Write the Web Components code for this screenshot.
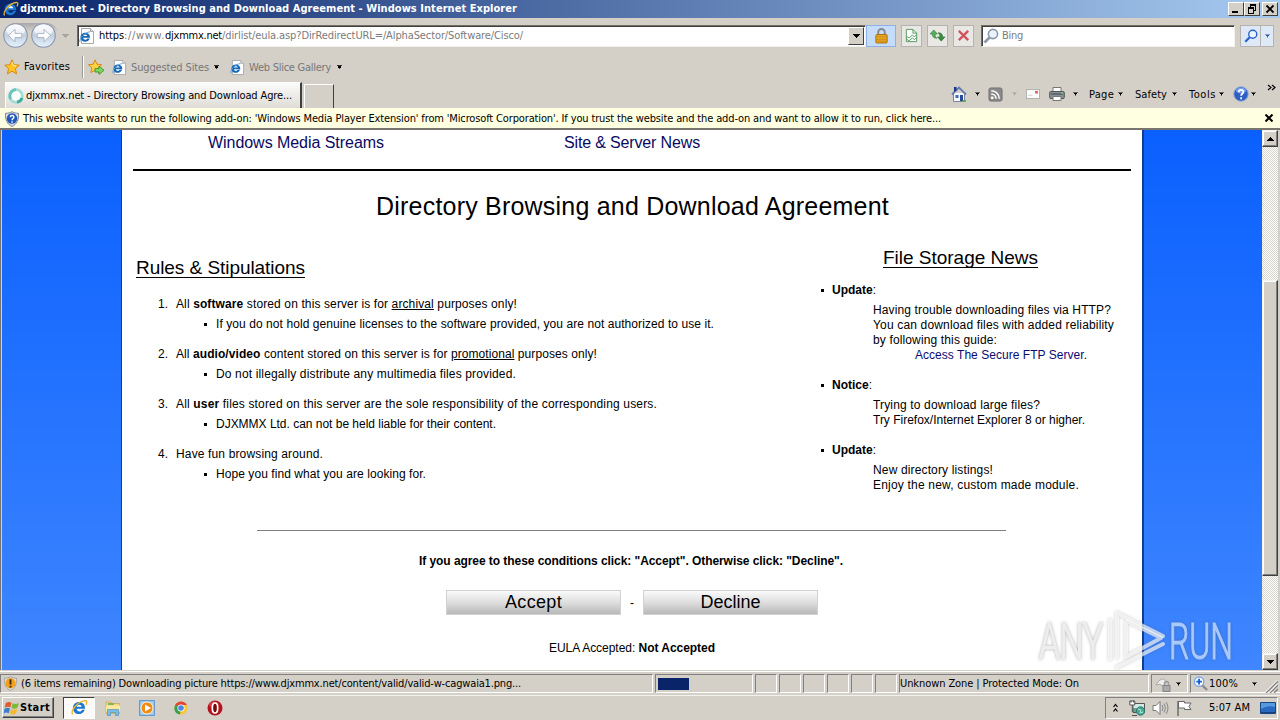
<!DOCTYPE html>
<html lang="en">
<head>
<meta charset="utf-8">
<title>djxmmx.net - Directory Browsing and Download Agreement</title>
<style>
    html, body { margin: 0; height: 100%; overflow: hidden; }
</style>
</head>
<body>
<ie-window></ie-window>

<script>
const ICONS = {
    ie: `<path d="M13.200 9.200H5.300c.2 3.200 4.300 3.300 5 .8h2.700C10.500 16.500 1.800 15 1.800 8.500 1.800 1 13.500.5 13.200 9.200z" fill="#1b77d2"/><path d="M5.400 7.300h4.700C9.800 4.700 5.800 4.700 5.400 7.300z" fill="#fff"/><path d="M1.500 14.500C-.5 11 6 2.500 13 1.500c2.500-.3 2 2 1 4" fill="none" stroke="#e9b82c" stroke-width="1.300"/>`,
    iepage: `<path d="M2.500.5h9l3 3v12h-12z" fill="#fff" stroke="#a9a9a9"/><path d="M11.500.5v3h3" fill="#ddd" stroke="#a9a9a9"/><path d="M11 9.800H4.200c.3 2.400 3.300 2.300 4 .6h2.600C9 15.400 1.500 14.500 1.500 9.200 1.500 3 11.500 3.200 11 9.800z" fill="#1768b8"/><path d="M4.300 8h3.900C7.800 6.200 5 6.200 4.300 8z" fill="#fff"/><path d="M1 14C0 11 5 4.500 11 3.800" fill="none" stroke="#55a0dd"/>`,
    back: `<circle cx="12" cy="12" r="11.300" fill="url(#g)" stroke="#8595aa"/><ellipse cx="12" cy="7" rx="9" ry="5.500" fill="#fff" opacity=".65"/><path d="M5.500 12l6-6v4h6.500v4h-6.500v4z" fill="#fff" stroke="#9dacbd" stroke-width=".8"/><defs><linearGradient id="g" x2="0" y2="1"><stop stop-color="#f3f5f8"/><stop offset=".5" stop-color="#c5d0de"/><stop offset="1" stop-color="#e5f3ff"/></linearGradient></defs>`,
    star: `<path d="M8 .8l2.100 4.900 5.200.5-3.900 3.500 1.200 5.200L8 12.200l-4.600 2.700 1.200-5.200L.7 6.200l5.200-.5z" fill="#ffc423" stroke="#d98a12"/><path d="M8 3l1.300 3.500 3 .4" fill="none" stroke="#fff0a0"/>`,
    addstar: `<path d="M7 .8l1.900 4.400 4.800.5-3.500 3.200 1 4.700L7 11.200l-4.200 2.400 1-4.700L.5 5.700l4.700-.5z" fill="#ffd042" stroke="#d98a12"/><path d="M7 9.500h4V7l5 4.200-5 4.300V13H7z" fill="#7fd65f" stroke="#2b9228" stroke-width=".8"/>`,
    lock: `<path d="M4.500 8V4.500a3.500 3.500 0 017 0V8" fill="none" stroke="#888" stroke-width="2"/><rect x="2" y="7" width="12" height="9" rx="1" fill="#efad25" stroke="#a56a08"/><path d="M2.500 9.500h11M2.500 12h11M2.500 14h11" stroke="#b97b11" stroke-width=".8"/>`,
    compat: `<path d="M2.500 1.500h7l4 4v9h-11z" fill="#fff" stroke="#52975b"/><path d="M9.500 1.500v4h4M2.500 9l3 1.500 3.500-3 2 2 2.500-2.500M2.500 12l3 1.500 3.500-3 2 2 2.500-2.500" fill="none" stroke="#52975b"/>`,
    refresh: `<path d="M0 6.500l4-4.500 4 4.500H5.500C5.500 9 6 10 7.500 11 4 11 2.500 9.500 2.500 6.500z" fill="#55ad59" stroke="#2e7b34" stroke-width=".6"/><path d="M16 9.500L12 14 8 9.500h2.500C10.500 7 10 6 8.500 5c3.500 0 5 1.500 5 4.500z" fill="#398b40" stroke="#286c2f" stroke-width=".6"/>`,
    stop: `<path d="M3 3l10 10M13 3L3 13" stroke="#d3535c" stroke-width="2.500"/>`,
    find: `<circle cx="10" cy="6" r="4.600" fill="#eaf4ff" stroke="var(--ink,#8c98a6)" stroke-width="1.600"/><path d="M6.500 9.500L1.500 14.500" stroke="var(--ink,#8c98a6)" stroke-width="2.600"/>`,
    home: `<path d="M2.500 7v8.500h11V7" fill="#f6f8ff" stroke="#7886a5"/><path d="M1 8.500L8 1.500l7 7" fill="none" stroke="#5f7cad" stroke-width="1.800"/><path d="M3 1h2.500v3L3 6z" fill="#19328a"/><rect x="4.500" y="9" width="3" height="3" fill="#3e6db8"/><rect x="9" y="9" width="3" height="6" fill="#2a4998"/><path d="M12 14h3v2h-4z" fill="#62ad48"/>`,
    rss: `<rect x="1" y="1" width="14" height="14" rx="2" fill="#8a8a8a" stroke="#707070"/><circle cx="4.500" cy="11.500" r="1.500" fill="#fff"/><path d="M3.500 7.500a5 5 0 015 5M3.500 4a8.500 8.500 0 018.500 8.500" fill="none" stroke="#fff" stroke-width="1.600"/>`,
    mail: `<rect x=".5" y="3" width="15" height="10" fill="#fdfdfd" stroke="#aaa"/><rect x="10.500" y="4.500" width="3" height="3" fill="#e0555a"/><path d="M2.500 9.500h5" stroke="#ccc"/>`,
    printer: `<path d="M4 6V1.500h8V6" fill="#fff" stroke="#777"/><rect x=".7" y="5.500" width="14.600" height="7" rx="1" fill="#888f99" stroke="#50555b"/><path d="M2 8h12" stroke="#3f444a"/><path d="M4 10.500h8v4H4z" fill="#fff" stroke="#777"/><path d="M12 7h2" stroke="#8ce65f"/>`,
    help: `<circle cx="8" cy="8" r="7.300" fill="#2e5fc4" stroke="#9ab0d4"/><ellipse cx="8" cy="4.500" rx="5" ry="3" fill="#7ba0ea"/><path d="M5.700 6.100c.2-3 4.900-2.800 4.700 0 0 1.700-2.300 1.700-2.300 3.700M8.100 11.200v2" fill="none" stroke="#fff" stroke-width="1.700"/>`,
    shield: `<path d="M8 .7c2 1.200 4 1.600 6.500 1.600C15 9 12.500 13.500 8 15.500 3.500 13.500 1 9 1.500 2.300 4 2.300 6 1.900 8 .7z" fill="#d9dde6" stroke="#7b8494"/><circle cx="8" cy="7.500" r="5.200" fill="#2458b8"/><path d="M6.200 6.300c.2-2.500 3.900-2.200 3.700 0 0 1.200-1.800 1.300-1.800 2.900M8.100 10.300v1.500" fill="none" stroke="#fff" stroke-width="1.400"/>`,
    warn: `<path d="M8 .7c2 1.200 4 1.600 6.500 1.600C15 9 12.500 13.500 8 15.500 3.500 13.500 1 9 1.500 2.300 4 2.300 6 1.900 8 .7z" fill="#ddd" stroke="#a0a0a0"/><circle cx="8" cy="7.700" r="5.500" fill="#f3a11e"/><path d="M8 3.500v5.500M8 10.300v2" stroke="#402800" stroke-width="2"/>`,
    ring: `<circle cx="8" cy="8" r="6.300" fill="#f9fdfb" stroke="#a5dcd5" stroke-width="2.800"/><path d="M8 1.700a6.300 6.300 0 00-5.300 9.500" fill="none" stroke="#6cc4b9" stroke-width="2.800"/><path d="M14 10a6.300 6.300 0 01-5 4.200" fill="none" stroke="#3fae9f" stroke-width="2.800"/>`,
    windows: `<path d="M1.800 3C4 1.500 5.800 1.800 7.500 2.800L6.300 7.500C4.500 6.500 2.800 6.500.7 7.700z" fill="#e25b2c"/><path d="M8.600 3.200c2 1 3.800 1 6.200-.2L13.500 7.800c-2 1.200-4.200 1.100-6.100.1z" fill="#7cb936"/><path d="M.5 8.800c2-1.200 3.800-1.200 5.500-.2L4.800 13.300c-2-1-3.600-1-5.100.1z" fill="#3e7ecb"/><path d="M7.100 9c2 1 4 1 6.100 0L12 13.800c-2 1-4 1-6.100 0z" fill="#f4b92f"/>`,
    folder: `<path d="M1 3.500v-1.500h5l1 1.500h7.500v10H1z" fill="#f6d779" stroke="#c7a451" stroke-width=".7"/><path d="M3 3h6v2H3z" fill="#76b85b"/><path d="M1 5.500h14v6H1z" fill="#fbe8a0"/><path d="M2.500 15.500V9.500h11v6h-3v-3h-5v3z" fill="#77bde8" stroke="#4788b9" stroke-width=".6"/>`,
    player: `<rect x=".7" y=".7" width="14.600" height="14.600" fill="#a8d1f2" stroke="#4e8fc9"/><circle cx="8" cy="8" r="6" fill="#f28a16" stroke="#fff0d0"/><path d="M6 4.500v7L12 8z" fill="#fff"/>`,
    chrome: `<circle cx="8" cy="8" r="6.500" fill="#fbc72c"/><path d="M8 8L2 5C4.500.2 12 .2 14 5H8z" fill="#df4637"/><path d="M2.200 5L8 8l-1 6.400C1.500 14 .3 8.500 2.200 5z" fill="#3a9e50"/><circle cx="8" cy="8" r="3.600" fill="#fff"/><circle cx="8" cy="8" r="2.800" fill="#4b87e8"/>`,
    opera: `<circle cx="8" cy="8" r="7.500" fill="#b5121b"/><ellipse cx="7" cy="4.500" rx="5" ry="3" fill="#e5525a" opacity=".65"/><ellipse cx="8" cy="8" rx="2.700" ry="5" fill="#7c080e" stroke="#fff" stroke-width="1.700"/>`,
    net: `<path d="M4 3.500h11.500v9H4z" fill="#67a895" stroke="#555"/><path d="M4.500 4h10.500v4H4.500z" fill="#d5e9e4"/><path d="M.8 1h5v4h-5zM3.300 5v7M2 .5v2M4.600.5v2" fill="#fff" stroke="#555"/><circle cx="11.500" cy="11" r="4.200" fill="#4aa69a" stroke="#2a776f"/><path d="M9 9l3 1-1 3 3-1" stroke="#b3e6c2" fill="none"/><path d="M3 15.500h5" stroke="#555"/>`,
    speaker: `<path d="M1 5.500h3l4-4v13l-4-4H1z" fill="#fff" stroke="#777"/><path d="M10 5q2 3 0 6M12 3.500q3 4.500 0 9M14 2q4 6 0 12" fill="none" stroke="#888"/>`,
    flag: `<path d="M2 1v15" stroke="#666" stroke-width="1.400"/><path d="M2.500 1.500h6v1.500h6.500l-2 3.500 2 3H8.500V8h-6z" fill="#fff" stroke="#666"/>`,
    desktop: `<path d="M.5 2.500h15v11H.5z" fill="#2669bf" stroke="#184680"/><path d="M1 3h14v4Q7 5 1 9z" fill="#5799df"/><path d="M1 12.500h14" stroke="#1b3f7d"/><path d="M5 15h6" stroke="#bcd"/>`,
    filter: `<path d="M1 9q4-7 8-6l2 3-3 4q-3-3-7-1z" fill="#eee" stroke="#aaa"/><path d="M9.500 10V7.500a2 2 0 014 0V10" fill="none" stroke="#999" stroke-width="1.400"/><rect x="8" y="9.500" width="7" height="6" fill="#aaa" stroke="#858585"/>`,
    zoomin: `<circle cx="6.500" cy="6" r="5" fill="#fff" stroke="#7caae5" stroke-width="1.500"/><path d="M3.500 6h6M6.500 3v6" stroke="#155fd0" stroke-width="2"/><path d="M10 10l5 5" stroke="#8b8b8b" stroke-width="2.400"/>`
};

// Single line of text, tracked so that it fills the width in the "w" attribute
class UiText extends HTMLElement {
    constructor() {
        super();
        this.attachShadow({mode: 'open'}).innerHTML = `
            <style>:host { display: inline-block; flex: none; white-space: nowrap; }</style><slot></slot>`;
    }

    connectedCallback() {
        const w = parseFloat(this.getAttribute('w'));
        if (!w) return;
        this.style.letterSpacing = '0';
        const natural = this.getBoundingClientRect().width;
        this.style.letterSpacing = (w - natural) / this.textContent.length + 'px';
        this.style.width = w + 'px';
    }
}

class UiIcon extends HTMLElement {
    constructor() {
        super();
        this.attachShadow({mode: 'open'});
    }

    connectedCallback() {
        const size = this.getAttribute('size') || 16;
        const box = this.getAttribute('name') === 'back' ? 24 : 16;
        this.shadowRoot.innerHTML = `
            <style>
                :host { display: block; flex: none; width: ${size}px; height: ${size}px; }
                svg { display: block; overflow: visible; }
            </style>
            <svg width="${size}" height="${size}" viewBox="0 0 ${box} ${box}">${ICONS[this.getAttribute('name')]}</svg>`;
    }
}

// Small triangle used by menus, combo boxes and scroll buttons
class UiArrow extends HTMLElement {
    constructor() {
        super();
        this.attachShadow({mode: 'open'}).innerHTML = `
            <style>
                :host { display: block; flex: none; width: 7px; height: 4px; color: #000; }
                :host([up]) { transform: rotate(180deg); }
                svg { display: block; }
            </style>
            <svg width="7" height="4" shape-rendering="crispEdges"><path d="M0 0h7L3.500 4z" fill="currentColor"/></svg>`;
    }
}

const ROW = `* { box-sizing: border-box; } :host { display: flex; box-sizing: border-box; flex: none; align-items: center; }`;

function define(name, html) {
    customElements.define(name, class extends HTMLElement {
        constructor() {
            super();
            this.attachShadow({mode: 'open'}).innerHTML = html;
        }
    });
}

customElements.define('ui-text', UiText);
customElements.define('ui-icon', UiIcon);
customElements.define('ui-arrow', UiArrow);

define('ie-titlebar', `
    <style>
        ${ROW}
        :host { height: 18px; padding: 0 2px 0 3px; background: linear-gradient(90deg, #0a246a, #a6caf0); color: #fff; font-weight: bold; }
        ui-text { margin-left: 1px; }
        .buttons { display: flex; margin-left: auto; }
        .buttons svg { display: block; width: 16px; height: 14px; background: #d4d0c8; border: 1px solid; border-color: #fff #404040 #404040 #fff; }
        .buttons svg:last-child { margin-left: 2px; }
    </style>
    <ui-icon name="ie"></ui-icon><ui-text w="497">djxmmx.net - Directory Browsing and Download Agreement - Windows Internet Explorer</ui-text>
    <div class="buttons">
        <svg viewBox="0 0 14 12"><path d="M3 9h6" stroke="#000" stroke-width="2"/></svg>
        <svg viewBox="0 0 14 12" shape-rendering="crispEdges"><path d="M5 2.500h6M5 1.500h6M10.500 2v5H9M5.500 2v2M3 5.500h6M3 4.500h6M3.500 5v5h5V5" fill="none" stroke="#000"/></svg>
        <svg viewBox="0 0 14 12"><path d="M3.500 2.500l7 7M10.500 2.500l-7 7" stroke="#000" stroke-width="1.800"/></svg>
    </div>`);

define('ie-navbar', `
    <style>
        ${ROW}
        :host { height: 35px; padding-left: 3px; }
        .travel { display: flex; gap: 3px; flex: none; padding-right: 3px; border-radius: 13px; background: linear-gradient(#aaa8ad, #d4d0c8 35%); }
        .travel ui-icon:last-child { transform: scaleX(-1); }
        .field { display: flex; align-items: center; height: 22px; flex: none; background: #fff; border: 1px solid; border-color: #716f64 #f4f2ec #f4f2ec #716f64; box-shadow: inset 1px 1px #404040; }
        .field ui-text { padding-top: 1px; }
        .button { display: flex; align-items: center; justify-content: center; height: 22px; width: 21px; flex: none; border: 1px solid #b5b3af; background: #e9e8e5; }
        .combo { width: 16px; height: 18px; margin-left: auto; margin-right: 1px; background: #d4d0c8; border: 1px solid; border-color: #fff #404040 #404040 #fff; display: flex; align-items: center; justify-content: center; }
        .gray { color: #7b7b7b; }
    </style>
    <div class="travel"><ui-icon name="back" size="25"></ui-icon><ui-icon name="back" size="25"></ui-icon></div>
    <ui-arrow style="margin-left:3px;color:#aaa69f"></ui-arrow>
    <div class="field" style="width:789px;margin-left:8px">
        <ui-icon name="iepage" style="margin-left:1px"></ui-icon>
        <ui-text w="25" style="margin-left:4px">https</ui-text><ui-text class="gray" w="41">://www.</ui-text><ui-text w="57">djxmmx.net</ui-text><ui-text class="gray" w="301">/dirlist/eula.asp?DirRedirectURL=/AlphaSector/Software/Cisco/</ui-text>
        <div class="combo"><ui-arrow></ui-arrow></div>
    </div>
    <div class="button" style="width:30px;background:#c5dcfa;border-color:#8db1e7"><ui-icon name="lock" size="15"></ui-icon></div>
    <div class="button" style="margin-left:5px"><ui-icon name="compat" size="15"></ui-icon></div>
    <div class="button" style="margin-left:5px"><ui-icon name="refresh" size="15"></ui-icon></div>
    <div class="button" style="margin-left:5px"><ui-icon name="stop" size="15"></ui-icon></div>
    <div class="field" style="width:254px;margin-left:7px"><ui-icon name="find" style="margin-left:1px"></ui-icon><ui-text class="gray" w="21" style="margin-left:3px">Bing</ui-text></div>
    <div class="button" style="margin-left:5px;background:#dfe8f7;--ink:#2b62c8"><ui-icon name="find" size="14"></ui-icon></div>
    <div class="button" style="width:14px;margin-left:-1px;background:#dfe8f7"><ui-arrow style="color:#235ba8;transform:scale(.8)"></ui-arrow></div>`);

define('ie-favorites', `
    <style>
        ${ROW}
        :host { height: 28px; padding-left: 4px; color: #777; }
        .line { width: 2px; height: 22px; margin: 0 5px 0 12px; border-left: 1px solid #999; border-right: 1px solid #fff; }
    </style>
    <ui-icon name="star"></ui-icon><ui-text w="46" style="margin-left:4px;color:#000">Favorites</ui-text>
    <div class="line" style="margin-right:4px"></div>
    <ui-icon name="addstar"></ui-icon>
    <ui-icon name="iepage" size="15" style="margin-left:8px"></ui-icon><ui-text w="78" style="margin:1px 0 0 4px">Suggested Sites</ui-text><ui-arrow style="margin-left:4px;transform:scale(.85)"></ui-arrow>
    <ui-icon name="iepage" size="15" style="margin-left:10px"></ui-icon><ui-text w="82" style="margin:1px 0 0 4px">Web Slice Gallery</ui-text><ui-arrow style="margin-left:5px;transform:scale(.85)"></ui-arrow>`);

define('ie-tabs', `
    <style>
        ${ROW}
        :host { height: 27px; padding-left: 5px; align-items: flex-end; }
        .tab { display: flex; align-items: center; width: 297px; height: 26px; padding: 1px 0 0 2px; background: linear-gradient(#fbfbfa, #dfdcd6); border: solid; border-width: 1px 2px 0 1px; border-color: #fff #404040 #fff #fff; }
        .new { width: 30px; height: 24px; margin-left: 2px; border: solid; border-width: 1px 1px 0 1px; border-color: #fff #404040 #fff #fff; }
        .commands { display: flex; align-items: center; height: 28px; margin-left: auto; width: 329px; flex: none; }
        .commands ui-text { padding-top: 1px; }
        ui-arrow { transform: scale(.8); }
    </style>
    <div class="tab"><ui-icon name="ring"></ui-icon><ui-text w="266" style="margin-left:2px">djxmmx.net - Directory Browsing and Download Agre...</ui-text></div>
    <div class="new"></div>
    <div class="commands">
        <ui-icon name="home"></ui-icon><ui-arrow style="margin-left:7px"></ui-arrow>
        <ui-icon name="rss" size="15" style="margin-left:7px"></ui-icon><ui-arrow style="margin-left:8px;color:#aaa69f"></ui-arrow>
        <ui-icon name="mail" size="14" style="margin-left:8px"></ui-icon>
        <ui-icon name="printer" style="margin-left:9px"></ui-icon><ui-arrow style="margin-left:7px"></ui-arrow>
        <ui-text w="25" style="margin-left:10px">Page</ui-text><ui-arrow style="margin-left:3px"></ui-arrow>
        <ui-text w="32" style="margin-left:11px">Safety</ui-text><ui-arrow style="margin-left:4px"></ui-arrow>
        <ui-text w="27" style="margin-left:11px">Tools</ui-text><ui-arrow style="margin-left:2px"></ui-arrow>
        <ui-icon name="help" style="margin-left:8px"></ui-icon><ui-arrow style="margin-left:1px"></ui-arrow>
        <svg width="9" height="8" style="margin:-13px 0 0 10px"><path d="M1 1l3 2.500L1 6M5 1l3 2.500L5 6" fill="none" stroke="#000" stroke-width="1.200"/></svg>
    </div>`);

define('ie-infobar', `
    <style>
        ${ROW}
        :host { height: 22px; padding: 0 7px 0 4px; background: #ffffe1; border-bottom: 2px solid #77756d; }
        svg { margin-left: auto; }
    </style>
    <ui-icon name="shield" style="margin-top:1px"></ui-icon><ui-text w="918" style="margin:2px 0 0 3px">This website wants to run the following add-on: 'Windows Media Player Extension' from 'Microsoft Corporation'. If you trust the website and the add-on and want to allow it to run, click here...</ui-text>
    <svg width="8" height="8"><path d="M.5.500l7 7M7.500.500l-7 7" stroke="#000" stroke-width="2"/></svg>`);

define('ie-scrollbar', `
    <style>
        * { box-sizing: border-box; }
        :host { display: flex; flex-direction: column; flex: none; width: 16px; background: repeating-conic-gradient(#fff 0 25%, #d8d5cd 0 50%) 0 0 / 2px 2px; }
        .button, .thumb { display: flex; flex: none; align-items: center; justify-content: center; height: 17px; background: #d4d0c8; border: 1px solid; border-color: #f4f2ec #404040 #404040 #f4f2ec; box-shadow: inset -1px -1px #808080, inset 1px 1px #fff; }
        .thumb { height: 296px; margin: 133px 0 auto; }
    </style>
    <div class="button"><ui-arrow up></ui-arrow></div><div class="thumb"></div><div class="button"><ui-arrow></ui-arrow></div>`);

define('rule-item', `
    <style>
        :host { display: block; height: 50px; line-height: 20px; }
        .row { display: flex; height: 20px; }
        .num { width: 40px; text-align: right; padding-right: 8px; box-sizing: border-box; }
        .dot { width: 3px; height: 3px; margin: 9px 9px 0 68px; background: #000; }
    </style>
    <div class="row"><span class="num"><slot name="num"></slot></span><slot></slot></div>
    <div class="row"><span class="dot"></span><slot name="note"></slot></div>`);

define('news-item', `
    <style>
        :host { display: block; margin-bottom: 15px; line-height: 15px; }
        .head { display: flex; height: 20px; line-height: 20px; }
        .dot { width: 3px; height: 3px; margin: 9px 8px 0 1px; background: #000; }
        .body { display: flex; flex-direction: column; align-items: flex-start; padding: 3px 0 0 53px; margin-bottom: -3px; }
    </style>
    <div class="head"><span class="dot"></span><slot name="head"></slot></div>
    <div class="body"><slot></slot></div>`);

define('eula-button', `
    <style>
        :host { display: flex; align-items: center; justify-content: center; box-sizing: border-box; width: 175px; height: 25px; border: 1px solid #d2d2d2; background: linear-gradient(#fafafa, #dedede 50%, #b8b8b8); font-size: 18px; }
    </style>
    <slot></slot>`);

define('eula-page', `
    <style>
        * { box-sizing: border-box; }
        :host { display: flex; flex: 1; padding-left: 119px; overflow: hidden; background: linear-gradient(#0a60ff, #3f86ff); font: 12px "Liberation Sans", Arial, sans-serif; font-stretch: normal; color: #000; }
        .paper { width: 1023px; flex: none; border: solid #123c8d; border-width: 0 2px 0 1px; background: #fff; display: flex; flex-direction: column; height: 540px; }
        .links { display: flex; height: 39px; padding-left: 86px; font-size: 16px; line-height: 25px; color: #0a0a63; }
        .rule { height: 2px; margin: 0 11px; background: #000; }
        h1, h2 { margin: 0; font-weight: normal; }
        h1 { font-size: 25px; line-height: 30px; padding: 20px 0 0 254px; height: 71px; }
        h2 { font-size: 19px; line-height: 22px; }
        h2 ui-text { height: 20px; line-height: 20px; border-bottom: 1px solid #000; }
        .columns { display: flex; height: 288px; }
        .rules { width: 698px; padding: 15px 0 0 14px; }
        .rules rule-item:first-of-type { margin-top: 15px; }
        .news { padding-top: 5px; }
        .news h2 { padding-left: 63px; margin-bottom: 11px; }
        a { color: #0a0a73; }
        .thin { width: 749px; height: 1px; margin-left: 135px; background: #808080; }
        .ask { font-weight: bold; margin: 22px 0 0 297px; height: 37px; line-height: 16px; }
        .buttons { display: flex; align-items: center; padding-left: 324px; height: 25px; }
        .state { margin: 25px 0 0 427px; line-height: 16px; }
    </style>
    <div class="paper">
        <div class="links"><ui-text w="176">Windows Media Streams</ui-text><ui-text w="136" style="margin-left:180px">Site &amp; Server News</ui-text></div>
        <div class="rule"></div>
        <h1><ui-text w="513">Directory Browsing and Download Agreement</ui-text></h1>
        <div class="columns">
            <div class="rules">
                <h2><ui-text w="169">Rules &amp; Stipulations</ui-text></h2>
                <rule-item><span slot="num">1.</span><ui-text w="341">All <b>software</b> stored on this server is for <u>archival</u> purposes only!</ui-text><ui-text slot="note" w="498">If you do not hold genuine licenses to the software provided, you are not authorized to use it.</ui-text></rule-item>
                <rule-item><span slot="num">2.</span><ui-text w="421">All <b>audio/video</b> content stored on this server is for <u>promotional</u> purposes only!</ui-text><ui-text slot="note" w="300">Do not illegally distribute any multimedia files provided.</ui-text></rule-item>
                <rule-item><span slot="num">3.</span><ui-text w="481">All <b>user</b> files stored on this server are the sole responsibility of the corresponding users.</ui-text><ui-text slot="note" w="280">DJXMMX Ltd. can not be held liable for their content.</ui-text></rule-item>
                <rule-item><span slot="num">4.</span><ui-text w="147">Have fun browsing around.</ui-text><ui-text slot="note" w="210">Hope you find what you are looking for.</ui-text></rule-item>
            </div>
            <div class="news">
                <h2><ui-text w="155">File Storage News</ui-text></h2>
                <news-item><ui-text slot="head" w="44"><b>Update</b>:</ui-text><ui-text w="238">Having trouble downloading files via HTTP?</ui-text><ui-text w="241">You can download files with added reliability</ui-text><ui-text w="124">by following this guide:</ui-text><ui-text w="172" style="margin-left:42px"><a>Access The Secure FTP Server</a>.</ui-text></news-item>
                <news-item><ui-text slot="head" w="40"><b>Notice</b>:</ui-text><ui-text w="167">Trying to download large files?</ui-text><ui-text w="212">Try Firefox/Internet Explorer 8 or higher.</ui-text></news-item>
                <news-item><ui-text slot="head" w="44"><b>Update</b>:</ui-text><ui-text w="120">New directory listings!</ui-text><ui-text w="206">Enjoy the new, custom made module.</ui-text></news-item>
            </div>
        </div>
        <div class="thin"></div>
        <div class="ask"><ui-text w="424">If you agree to these conditions click: "Accept". Otherwise click: "Decline".</ui-text></div>
        <div class="buttons"><eula-button><ui-text w="57">Accept</ui-text></eula-button><ui-text style="width:22px;text-align:center">-</ui-text><eula-button><ui-text w="60">Decline</ui-text></eula-button></div>
        <div class="state"><ui-text w="166">EULA Accepted: <b>Not Accepted</b></ui-text></div>
    </div>`);

define('ie-status', `
    <style>
        ${ROW}
        :host { height: 25px; padding: 2px 0 2px; gap: 2px; border-top: 1px solid #fff; border-bottom: 1px solid #f3f1eb; }
        .pane { display: flex; align-items: center; height: 19px; width: 22px; flex: none; border: 1px solid; border-color: #808080 #fff #fff #808080; }
        .block { width: 31px; height: 12px; margin-left: 2px; background: #0a246a; }
    </style>
    <div class="pane" style="width:653px"><ui-icon name="warn" size="15" style="margin-left:2px"></ui-icon><ui-text w="500" style="margin-left:3px">(6 items remaining) Downloading picture https://www.djxmmx.net/content/valid/valid-w-cagwaia1.png...</ui-text></div>
    <div class="pane" style="width:98px"><div class="block"></div></div>
    <div class="pane"></div><div class="pane"></div><div class="pane"></div><div class="pane"></div><div class="pane"></div><div class="pane"></div>
    <div class="pane" style="width:250px"><ui-text w="179">Unknown Zone | Protected Mode: On</ui-text></div>
    <div class="pane" style="width:37px"><ui-icon name="filter" style="margin-left:3px"></ui-icon><ui-arrow style="margin-left:4px;transform:scale(.8)"></ui-arrow></div>
    <div class="pane" style="width:90px;border-right:0"><ui-icon name="zoomin" size="15" style="margin-left:2px"></ui-icon><ui-text w="29" style="margin-left:1px">100%</ui-text><ui-arrow style="margin-left:13px;transform:scale(.8)"></ui-arrow><svg width="13" height="13" style="margin:5px 0 0 7px"><path d="M1 13L13 1M5 13l8-8M9 13l4-4" stroke="#808080" stroke-width="1.300"/><path d="M0 12.500L12.500 0M4 12.500l8.500-8.500" stroke="#fff"/></svg></div>`);

define('win-taskbar', `
    <style>
        ${ROW}
        :host { height: 24px; padding-left: 2px; }
        .start { display: flex; align-items: center; width: 52px; height: 21px; margin-top: -1px; padding-left: 1px; font-weight: bold; border: 1px solid; border-color: #fff #404040 #404040 #fff; box-shadow: inset -1px -1px #808080; }
        .active { display: flex; align-items: center; justify-content: center; width: 32px; height: 22px; margin: -1px 10px 0 9px; background: #fbfaf8; border: 1px solid; border-color: #404040 #fff #fff #404040; }
        .apps { display: flex; gap: 18px; margin-top: -1px; }
        .tray { display: flex; align-items: center; margin: -1px 2px 0 auto; width: 173px; height: 22px; padding-left: 7px; border: 1px solid; border-color: #808080 #fff #fff #808080; }
    </style>
    <div class="start"><ui-icon name="windows"></ui-icon><ui-text w="30">Start</ui-text></div>
    <div class="active"><ui-icon name="ie" size="17"></ui-icon></div>
    <div class="apps"><ui-icon name="folder"></ui-icon><ui-icon name="player"></ui-icon><ui-icon name="chrome"></ui-icon><ui-icon name="opera"></ui-icon></div>
    <div class="tray">
        <svg width="5" height="10"><path d="M.5 4l2-2.500 2 2.500M.5 8.500l2-2.500 2 2.500" fill="none" stroke="#000" stroke-width="1.200"/></svg>
        <ui-icon name="net" style="margin-left:11px"></ui-icon><ui-icon name="speaker" style="margin-left:7px"></ui-icon><ui-icon name="flag" style="margin-left:8px"></ui-icon>
        <ui-text w="41" style="margin-left:17px">5:07 AM</ui-text><ui-icon name="desktop" style="margin-left:10px"></ui-icon>
    </div>`);

define('run-watermark', `
    <style>
        :host { display: block; width: 206px; height: 62px; pointer-events: none; filter: drop-shadow(0 0 1.500px rgba(80, 80, 80, .45)); }
        svg { display: block; overflow: visible; }
        text { font: 300 50px/1 Roboto, sans-serif; stroke-width: 1.200px; }
    </style>
    <svg width="206" height="62" fill="none">
        <text x="2" y="50" textLength="64" lengthAdjust="spacingAndGlyphs" fill="#eee" stroke="#eee">ANY</text>
        <g stroke="#fff" stroke-opacity=".65" stroke-width="4" stroke-linejoin="round" stroke-linecap="round">
            <path d="M73 50V11"/>
            <path d="M80 48V4l46 23"/>
            <path d="M89 14v34l35-19L90 12"/>
            <path d="M126 35L80 58"/>
        </g>
        <text x="132" y="50" textLength="64" lengthAdjust="spacingAndGlyphs" fill="#a9c9ff" stroke="#a9c9ff">RUN</text>
    </svg>`);

define('ie-window', `
    <style>
        :host { display: flex; flex-direction: column; width: 1280px; height: 720px; overflow: hidden; background: #d4d0c8; color: #000; font: 11px/14px "DejaVu Sans Condensed", "DejaVu Sans", sans-serif; font-stretch: condensed; }
        .view { display: flex; height: 540px; flex: none; padding: 0 2px 0 1px; position: relative; box-sizing: border-box; border-left: 1px solid #77756d; }
        run-watermark { position: absolute; left: 1036px; top: 479px; }
    </style>
    <ie-titlebar></ie-titlebar>
    <ie-navbar></ie-navbar>
    <ie-favorites></ie-favorites>
    <ie-tabs></ie-tabs>
    <ie-infobar></ie-infobar>
    <div class="view"><eula-page></eula-page><ie-scrollbar></ie-scrollbar><run-watermark></run-watermark></div>
    <ie-status style="margin-top:1px"></ie-status>
    <win-taskbar></win-taskbar>`);
</script>
</body>
</html>
